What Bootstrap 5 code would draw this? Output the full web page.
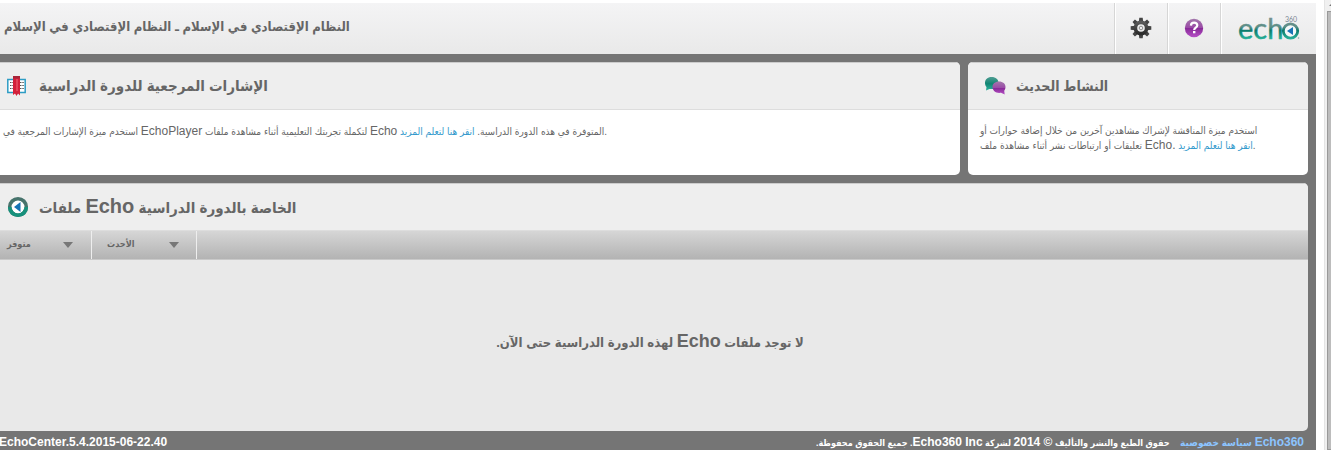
<!DOCTYPE html>
<html lang="ar">
<head>
<meta charset="utf-8">
<meta name="viewport" content="width=device-width, initial-scale=1">
<title>EchoCenter</title>
<link rel="stylesheet" href="https://cdn.jsdelivr.net/npm/bootstrap@5.3.0/dist/css/bootstrap.min.css">
<style>
body{font-family:"Liberation Sans","DejaVu Sans Condensed","DejaVu Sans",sans-serif;color:#666;background:#fff;overflow-x:hidden}
svg{display:block;flex:none}
.shell{background:#757575}
.topbar{height:54px;border-top:3px solid #fff;background:linear-gradient(#f4f4f5,#e9e9e9)}
.topbar h1,.panel-head h2{margin:0;font-weight:700;color:#666;white-space:nowrap}
.topbar h1{font-size:13px;line-height:24px;padding-bottom:4px}
.cell{border:0;border-left:1px solid #d6d6d6;box-shadow:inset 1px 0 #fff;background:none;padding:0}
.tool{width:53px;padding-bottom:2px}
.brand{width:96px}
.panel-box{background:#fff;border-radius:0 5px 5px 0;overflow:hidden}
.panel-head{height:48px;background:#eee;border-top:1px solid #ccc;border-bottom:1px solid #ddd;padding-left:7px;gap:10px}
.panel-head h2{font-size:15px;line-height:24px}
.panel-head .en{font-size:20px}
.panel-head svg{width:22px;height:22px}
.tops{min-height:113px}
.side{width:340px;border-radius:5px}
.side .panel-head{padding-left:16px}
.side h2{font-size:14px}
.copy{font-size:10px;line-height:14px;margin:0;padding:14px 3px}
.side .copy{padding:14px 12px}
.copy .en,.foot .en{font-size:12px}
.copy a{color:#3399cc;text-decoration:none}
.filters{height:29px;background:linear-gradient(#d6d6d6,#b3b3b3);border-bottom:1px solid #c9c9c9}
.filters button{width:105px;border:0;border-right:1px solid #eee;background:none;font-size:9px;font-weight:700;color:#666;padding:0 17px 0 15px}
.filters button:first-child{width:92px;padding:0 18px 0 7px}
.files{background:#e9e9e9}
.empty{height:171px;font-size:13px;font-weight:700;padding:0 8px 8px 0}
.empty .en{font-size:18px}
.foot{height:19px;font-size:9px;line-height:22px;font-weight:700;color:#fff;overflow:hidden;padding-right:12px;white-space:nowrap}
.build{margin-left:-1px}
.foot a{color:#8cc4ff;text-decoration:none;font-size:10px;margin-left:8px}
.rail{width:15px;padding-left:8px}
.track{background:#f0f0f0;border-left:1px solid #e4e4e4;padding-left:2px}
.track svg{width:5px;height:11px}
.thumb{background:#bcbcbc;border:1px solid #999;border-right:0}
</style>
</head>
<body>
<div class="d-flex min-vh-100">
<div class="shell flex-grow-1 d-flex flex-column overflow-hidden">
  <header class="topbar d-flex align-items-stretch">
    <h1 class="flex-grow-1 align-self-center ps-1">النظام الإقتصادي في الإسلام ـ النظام الإقتصادي في الإسلام</h1>
    <button class="cell tool d-flex align-items-center justify-content-center" aria-label="الإعدادات">
      <svg width="22" height="22" viewBox="-11 -11 22 22">
        <defs><linearGradient id="dark" x1="0" y1="0" x2="0" y2="1"><stop offset="0" stop-color="#5a5a5a"/><stop offset="1" stop-color="#2b2b2b"/></linearGradient></defs>
        <g fill="#444"><path id="tooth" d="M-2.2-6 -1.700-10.300H1.700L2.200-6zM-2.200 6 -1.700 10.300H1.700L2.200 6z"/><use href="#tooth" transform="rotate(45)"/><use href="#tooth" transform="rotate(90)"/><use href="#tooth" transform="rotate(135)"/></g>
        <circle r="5.600" fill="#eee" stroke="url(#dark)" stroke-width="3.600"/><circle r="1.800" fill="none" stroke="#777" stroke-width=".8"/>
      </svg>
    </button>
    <button class="cell tool d-flex align-items-center justify-content-center" aria-label="تعليمات">
      <svg width="20" height="20" viewBox="0 0 20 20">
        <defs><linearGradient id="violet" x1="0" y1="0" x2="0" y2="1"><stop offset="0" stop-color="#a377ab"/><stop offset=".48" stop-color="#9a4ba6"/><stop offset=".52" stop-color="#882a98"/><stop offset="1" stop-color="#b64fc6"/></linearGradient></defs>
        <circle cx="10" cy="10" r="9.200" fill="url(#violet)"/>
        <path d="M6.900 7.600C7 5.400 8.300 4.600 10.100 4.600c2 0 3.200 1.100 3.200 2.700 0 2.300-3.100 2.300-3.100 4.600" fill="none" stroke="#fff" stroke-width="2.200"/><rect x="9" y="13" width="2.400" height="2.300" fill="#fff"/>
      </svg>
    </button>
    <a class="cell brand" href="#" aria-label="echo360">
      <svg width="94" height="50" viewBox="0 0 94 50">
        <defs>
          <linearGradient id="teal" gradientUnits="userSpaceOnUse" x1="0" y1="13" x2="0" y2="37"><stop offset="0" stop-color="#7b8f90"/><stop offset=".45" stop-color="#5c8f88"/><stop offset=".6" stop-color="#0d7a6c"/><stop offset="1" stop-color="#2bb8a0"/></linearGradient>
        </defs>
        <text x="17" y="36" font-family="Lato, sans-serif" font-size="29" fill="url(#teal)" stroke="url(#teal)" stroke-width=".4">ech</text>
        <circle cx="69.500" cy="28" r="7.200" fill="#f4f8f8" stroke="url(#teal)" stroke-width="2.800"/>
        <path d="M66 28l6-4v8z" fill="#1673b5"/>
        <text x="64" y="19" font-family="Lato, sans-serif" font-size="7" fill="#7b8794">360</text>
        <circle cx="77.500" cy="35" r=".8" fill="#8aa"/>
      </svg>
    </a>
  </header>
  <main class="d-flex flex-column gap-2 pt-2 pe-2">
    <div class="d-flex gap-2 tops">
      <section class="panel-box flex-grow-1">
        <div class="panel-head d-flex align-items-center">
          <svg viewBox="0 0 22 22">
            <path d="M.8 4.500h8.200l1 1 1-1h7.200v13H11l-1 1-1-1H.8z" fill="#fff" stroke="#2d9cc4" stroke-width="1.500"/>
            <path d="M3 7.500h3M3 10.500h3M3 13.500h3M13 7.500h4M13 10.500h4M13 13.500h4" stroke="#555" stroke-dasharray="1.500 .8"/>
            <path d="M6 1h7v19.500l-2-2-1.500 2.500-1.500-2.500-2 1.500z" fill="#d4213a"/><path d="M6 1h7v2.500H6z" fill="#a8253a"/><path d="M10 4v12" stroke="#ef6a78"/>
          </svg>
          <h2>الإشارات المرجعية للدورة الدراسية</h2>
        </div>
        <p class="copy">استخدم ميزة الإشارات المرجعية في <span class="en">EchoPlayer</span> لتكملة تجربتك التعليمية أثناء مشاهدة ملفات <span class="en">Echo</span> المتوفرة في هذه الدورة الدراسية. <a href="#">انقر هنا لتعلم المزيد</a>.</p>
      </section>
      <section class="panel-box side">
        <div class="panel-head d-flex align-items-center">
          <svg viewBox="0 0 22 22">
            <defs><linearGradient id="green" x1="0" y1="0" x2="0" y2="1"><stop offset="0" stop-color="#4f9d92"/><stop offset=".5" stop-color="#118573"/><stop offset="1" stop-color="#2bb39d"/></linearGradient></defs>
            <path d="M7.500 2C12 2 14.500 4.500 14.500 8s-3 6-7 6l-2 0L2 15.500 2.500 12C1.500 11 1 9.500 1 8c0-3.500 2.500-6 6.500-6z" fill="url(#green)"/>
            <path d="M15 6.500c4 0 6.500 2.300 6.500 5.500 0 1.500-.5 2.800-1.300 3.800L20.700 19.500 17 17.800c-5 .8-8.500-2-8.500-5.800 0-3.200 2.500-5.500 6.500-5.500z" fill="url(#violet)"/>
          </svg>
          <h2>النشاط الحديث</h2>
        </div>
        <p class="copy">استخدم ميزة المناقشة لإشراك مشاهدين آخرين من خلال إضافة حوارات أو<br>تعليقات أو ارتباطات نشر أثناء مشاهدة ملف <span class="en">Echo.</span> <a href="#">انقر هنا لتعلم المزيد</a>.</p>
      </section>
    </div>
    <section class="panel-box files">
      <div class="panel-head d-flex align-items-center">
        <svg viewBox="0 0 22 22">
          <circle cx="11" cy="11" r="8.300" fill="#fff" stroke="#47736c" stroke-width="3.600"/>
          <path d="M2.700 11a8.300 8.300 0 0 0 16.600 0" fill="none" stroke="#16917c" stroke-width="3.600"/>
          <path d="M7 11l6.500-5v10z" fill="#1673b5"/>
        </svg>
        <h2>ملفات <span class="en">Echo</span> الخاصة بالدورة الدراسية</h2>
      </div>
      <div class="filters d-flex">
        <button class="d-flex align-items-center justify-content-between">متوفر <svg width="10" height="6" viewBox="0 0 10 6"><path d="M0 0h10L5 6z" fill="#777"/></svg></button>
        <button class="d-flex align-items-center justify-content-between">الأحدث <svg width="10" height="6" viewBox="0 0 10 6"><path d="M0 0h10L5 6z" fill="#777"/></svg></button>
      </div>
      <div class="empty d-flex align-items-center justify-content-center"><p class="m-0" dir="rtl">لا توجد ملفات <span class="en">Echo</span> لهذه الدورة الدراسية حتى الآن.</p></div>
    </section>
  </main>
  <footer class="foot d-flex justify-content-between">
    <span class="build en">EchoCenter.5.4.2015-06-22.40</span>
    <span dir="rtl"><a href="#"><span class="en">Echo360</span> سياسة خصوصية</a> حقوق الطبع والنشر والتأليف <span class="en">© 2014</span> لشركة <span class="en">Echo360 Inc</span>. جميع الحقوق محفوظة.</span>
  </footer>
</div>
<div class="rail d-flex">
  <div class="track flex-grow-1 d-flex flex-column">
    <svg viewBox="0 0 5 11"><path d="M2 6l3-3v3z" fill="#777"/></svg>
    <div class="thumb flex-grow-1"></div>
  </div>
</div>
</div>
<script src="https://cdn.jsdelivr.net/npm/bootstrap@5.3.0/dist/js/bootstrap.bundle.min.js"></script>
</body>
</html>
